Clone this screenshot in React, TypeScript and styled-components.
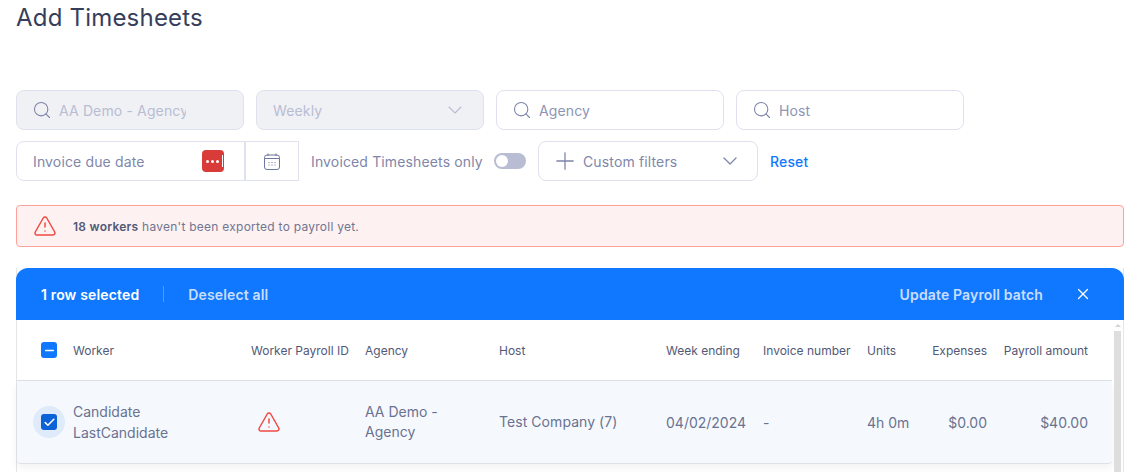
import styled, { createGlobalStyle } from "styled-components";
import { ChevronDown, Plus, Search, TriangleAlert, X, Check, Minus } from "lucide-react";

const GlobalStyle = createGlobalStyle`
  html, body {
    margin: 0;
    height: 472px;
    overflow: hidden;
    background: #fff;
  }
  body {
    font-family: Inter, "Noto Sans", sans-serif;
    color: #474f6d;
  }
  * { box-sizing: border-box; }
`;

const Page = styled.div`
  padding: 0 17px 0 16px;
`;

const Title = styled.h1`
  margin: 0;
  height: 90px;
  padding-top: 3px;
  font-size: 24px;
  line-height: 30px;
  font-weight: 400;
  color: #363e5c;
  letter-spacing: 0.2px;
`;

const FilterRow = styled.div`
  display: flex;
  align-items: center;
  gap: 12px;
  height: 40px;
  margin-bottom: 11px;
  letter-spacing: 0.14px;
`;

const Field = styled.div<{ $disabled?: boolean }>`
  display: flex;
  align-items: center;
  width: 228px;
  height: 40px;
  padding: 0 16px 0 15px;
  gap: 7px;
  border: 1px solid #dfe1ee;
  border-radius: 8px;
  font-size: 14px;
  background: ${(p) => (p.$disabled ? "#f0f1f5" : "#fff")};
  color: ${(p) => (p.$disabled ? "#b8bdd3" : "#8d94b5")};
  svg { color: #7d85a8; flex: none; }
`;

const ClipText = styled.span`
  width: 127px;
  overflow: hidden;
  white-space: nowrap;
`;

const SelectText = styled.span`
  flex: 1;
  padding-left: 1px;
`;

const DateGroup = styled.div`
  display: flex;
  height: 40px;
`;

const DateInput = styled.div`
  display: flex;
  align-items: center;
  justify-content: space-between;
  width: 229px;
  padding: 0 20px 0 16px;
  border: 1px solid #dfe1ee;
  border-radius: 8px 0 0 8px;
  font-size: 14px;
  color: #8087aa;
`;

const PasswordBadge = styled.div`
  display: flex;
  align-items: center;
  justify-content: flex-end;
  gap: 2px;
  width: 22px;
  height: 22px;
  padding-right: 1px;
  border-radius: 4px;
  background: #d93c38;
`;

const BadgeDot = styled.i`
  width: 3px;
  height: 3px;
  border-radius: 50%;
  background: #fff;
`;

const BadgeBar = styled.i`
  width: 1px;
  height: 12px;
  margin-left: 1px;
  background: #fff;
`;

const CalendarButton = styled.div`
  display: flex;
  align-items: center;
  justify-content: center;
  width: 55px;
  margin-left: -1px;
  border: 1px solid #dfe1ee;
  border-left-width: 2px;
  color: #6f779c;
`;

const ToggleLabel = styled.span`
  width: 171px;
  font-size: 14px;
  color: #7f86a9;
  white-space: nowrap;
`;

const Toggle = styled.div`
  display: flex;
  align-items: center;
  width: 32px;
  height: 16px;
  padding: 0 2px;
  border-radius: 8px;
  background: #b8bdd3;
`;

const ToggleKnob = styled.div`
  width: 12px;
  height: 12px;
  border-radius: 50%;
  background: #fff;
`;

const FiltersButton = styled.div`
  display: flex;
  align-items: center;
  width: 220px;
  height: 40px;
  padding: 0 15px 0 12px;
  gap: 3px;
  border: 1px solid #dfe1ee;
  border-radius: 8px;
  font-size: 14px;
  color: #8087aa;
  svg { color: #7d85a8; flex: none; }
`;

const ResetLink = styled.a`
  font-size: 14px;
  font-weight: 500;
  color: #0f78ff;
`;

const Alert = styled.div`
  display: flex;
  align-items: center;
  height: 42px;
  margin-top: 24px;
  padding-left: 16px;
  gap: 16px;
  border: 1px solid #fda29b;
  border-radius: 4px;
  background: #fef1f1;
  font-size: 12px;
  color: #6f7692;
  letter-spacing: 0.25px;
  strong { font-weight: 600; color: #515977; }
`;

const Panel = styled.section`
  margin-top: 21px;
  height: 210px;
  border-left: 1px solid #e4e5e9;
  border-right: 1px solid #e4e5e9;
`;

const BlueBar = styled.div`
  display: flex;
  align-items: center;
  height: 52px;
  margin: 0 -1px;
  padding: 0 32px 0 25px;
  border-radius: 12px 12px 0 0;
  background: #0f78ff;
  font-size: 14px;
  font-weight: 600;
  letter-spacing: 0.15px;
  color: #fff;
`;

const Divider = styled.span`
  width: 1px;
  height: 16px;
  margin: 0 24px;
  background: #4f9aff;
`;

const BarAction = styled.span`
  color: #c9defc;
`;

const Spacer = styled.span`
  flex: 1;
`;

const CloseButton = styled.span`
  display: flex;
  margin-left: 31px;
`;

const Body = styled.div`
  display: flex;
  height: 158px;
`;

const Table = styled.div`
  width: 1095px;
  flex: none;
`;

const Row = styled.div<{ $selected?: boolean }>`
  display: grid;
  grid-template-columns: 32px 178px 114px 134px 167px 97px 104px 65px 55px 101px;
  align-items: center;
  padding-left: 24px;
  height: ${(p) => (p.$selected ? "83px" : "61px")};
  border-bottom: 1px solid #dfe1e8;
  background: ${(p) => (p.$selected ? "#f5f9fe" : "#fff")};
  font-size: ${(p) => (p.$selected ? "14px" : "12px")};
  line-height: 21px;
  color: ${(p) => (p.$selected ? "#6a7290" : "#515977")};
  box-shadow: ${(p) => (p.$selected ? "0 4px 8px rgba(30, 40, 70, 0.06)" : "none")};
  border-radius: ${(p) => (p.$selected ? "0 0 4px 4px" : "0")};
`;

const Right = styled.span`
  text-align: right;
`;

const NoWrap = styled.span`
  white-space: nowrap;
`;

const AgencyCell = styled.span`
  line-height: 20px;
  padding-bottom: 1px;
`;

const HostCell = styled.span`
  padding-bottom: 2px;
  letter-spacing: 0.06px;
`;

const IconCell = styled.span`
  display: flex;
  padding-left: 6px;
  color: #ee4a43;
`;

const CheckHalo = styled.span`
  display: flex;
  align-items: center;
  justify-content: center;
  width: 32px;
  height: 32px;
  margin-left: -8px;
  border-radius: 50%;
  background: #dfeafa;
`;

const CheckBox = styled.span<{ $dark?: boolean }>`
  display: flex;
  align-items: center;
  justify-content: center;
  width: 16px;
  height: 16px;
  border-radius: 3px;
  background: ${(p) => (p.$dark ? "#0b62d6" : "#0f78ff")};
  color: #fff;
`;

const Scrollbar = styled.div`
  flex: none;
  width: 11px;
  padding: 4px 2px 0;
  display: flex;
  flex-direction: column;
  align-items: center;
`;

const ScrollArrow = styled.div`
  width: 0;
  height: 0;
  border-left: 3px solid transparent;
  border-right: 3px solid transparent;
  border-bottom: 3px solid #d4d4d4;
  margin-bottom: 4px;
`;

const ScrollThumb = styled.div`
  width: 7px;
  flex: 1;
  background: #dedede;
`;

function CalendarIcon() {
  return (
    <svg width="16" height="17" viewBox="0 0 16 17" fill="none" stroke="currentColor" strokeWidth="1">
      <rect x="0.5" y="2" width="15" height="14.5" rx="2.5" />
      <path d="M0.5 5.5H15.5M4 0.5V3M12 0.5V3" />
      <path d="M4.5 9.5h1M7.5 9.5h1M10.5 9.5h1M4.5 12h1M7.5 12h1M10.5 12h1" strokeWidth="1.2" />
    </svg>
  );
}

function App() {
  return (
    <Page>
      <GlobalStyle />
      <Title>Add Timesheets</Title>

      <FilterRow>
        <Field $disabled>
          <Search size={20} strokeWidth={1.3} />
          <ClipText>AA Demo - Agency</ClipText>
        </Field>
        <Field $disabled>
          <SelectText>Weekly</SelectText>
          <ChevronDown size={24} strokeWidth={1.1} color="#b8bdd3" />
        </Field>
        <Field>
          <Search size={20} strokeWidth={1.3} />
          <span>Agency</span>
        </Field>
        <Field>
          <Search size={20} strokeWidth={1.3} />
          <span>Host</span>
        </Field>
      </FilterRow>

      <FilterRow>
        <DateGroup>
          <DateInput>
            Invoice due date
            <PasswordBadge>
              <BadgeDot />
              <BadgeDot />
              <BadgeDot />
              <BadgeBar />
            </PasswordBadge>
          </DateInput>
          <CalendarButton>
            <CalendarIcon />
          </CalendarButton>
        </DateGroup>
        <ToggleLabel>Invoiced Timesheets only</ToggleLabel>
        <Toggle>
          <ToggleKnob />
        </Toggle>
        <FiltersButton>
          <Plus size={28} strokeWidth={1.1} />
          <SelectText>Custom filters</SelectText>
          <ChevronDown size={24} strokeWidth={1.3} />
        </FiltersButton>
        <ResetLink>Reset</ResetLink>
      </FilterRow>

      <Alert>
        <TriangleAlert size={24} strokeWidth={1.5} color="#ee4a43" />
        <span>
          <strong>18 workers</strong> haven't been exported to payroll yet.
        </span>
      </Alert>

      <Panel>
        <BlueBar>
          <span>1 row selected</span>
          <Divider />
          <BarAction>Deselect all</BarAction>
          <Spacer />
          <BarAction>Update Payroll batch</BarAction>
          <CloseButton>
            <X size={18} strokeWidth={1.6} />
          </CloseButton>
        </BlueBar>
        <Body>
          <Table>
            <Row>
              <CheckBox>
                <Minus size={13} strokeWidth={3} />
              </CheckBox>
              <span>Worker</span>
              <NoWrap>Worker Payroll ID</NoWrap>
              <span>Agency</span>
              <span>Host</span>
              <NoWrap>Week ending</NoWrap>
              <NoWrap>Invoice number</NoWrap>
              <span>Units</span>
              <Right>Expenses</Right>
              <Right>Payroll amount</Right>
            </Row>
            <Row $selected>
              <CheckHalo>
                <CheckBox $dark>
                  <Check size={13} strokeWidth={3} />
                </CheckBox>
              </CheckHalo>
              <span>
                Candidate
                <br />
                LastCandidate
              </span>
              <IconCell>
                <TriangleAlert size={24} strokeWidth={1.5} />
              </IconCell>
              <AgencyCell>
                AA Demo -
                <br />
                Agency
              </AgencyCell>
              <HostCell>Test Company (7)</HostCell>
              <span>04/02/2024</span>
              <span>-</span>
              <span>4h 0m</span>
              <Right>$0.00</Right>
              <Right>$40.00</Right>
            </Row>
          </Table>
          <Scrollbar>
            <ScrollArrow />
            <ScrollThumb />
          </Scrollbar>
        </Body>
      </Panel>
    </Page>
  );
}

export default App;
